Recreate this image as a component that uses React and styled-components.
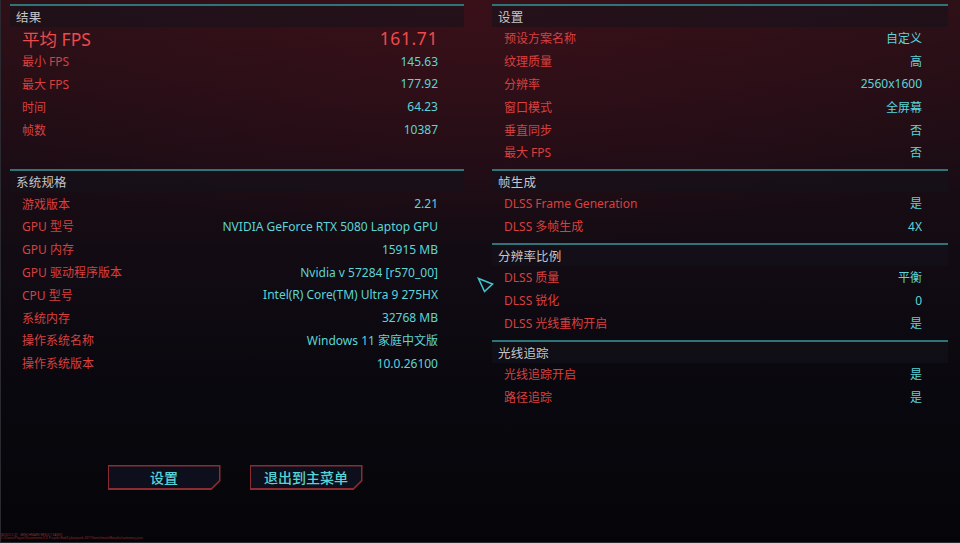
import React from "react";
import styled, { createGlobalStyle } from "styled-components";

const Global = createGlobalStyle`
  html, body { margin: 0; padding: 0; background: #06060a; }
  body { font-family: "Noto Sans", "Noto Sans CJK SC", sans-serif; }
  * { box-sizing: border-box; }
`;

const Page = styled.div`
  position: relative;
  width: 960px;
  height: 543px;
  overflow: hidden;
  background:
    radial-gradient(ellipse 70% 45% at 50% 0%, rgba(70, 16, 26, 0.55), rgba(0, 0, 0, 0) 100%),
    linear-gradient(180deg, #2a1017 0%, #1f0d15 22%, #120b13 48%, #09080e 72%, #050509 100%);
  box-shadow: inset 1px -1px 0 #2a2a30;
  display: grid;
  grid-template-columns: 454px 456px;
  column-gap: 28px;
  padding: 4px 0 0 10px;
  align-items: start;
`;

const Column = styled.div`
  display: flex;
  flex-direction: column;
  gap: 5.3px;
`;

const Section = styled.section`
  border-top: 2px solid #2f7479;
  min-height: ${(p) => p.$minH || 0}px;
`;

const SectionHead = styled.div`
  height: 21px;
  display: flex;
  align-items: center;
  padding-left: 6px;
  background: rgba(20, 18, 28, 0.55);
  color: #c6c6c8;
  font-size: 12.5px;
  letter-spacing: 0.2px;
`;

const Row = styled.div`
  height: 22.8px;
  display: flex;
  align-items: center;
  justify-content: space-between;
  padding: 0 26px 0 12px;
  font-size: ${(p) => (p.$big ? 17.5 : 12)}px;
`;

const Label = styled.span`
  color: ${(p) => (p.$big ? "#ee4a4b" : "#d8403f")};
  white-space: nowrap;
`;

const Value = styled.span`
  color: ${(p) => (p.$big ? "#ee4a4b" : "#5cd4d8")};
  white-space: nowrap;
  letter-spacing: ${(p) => (p.$big ? "0.6px" : "0")};
`;

const Buttons = styled.div`
  display: flex;
  justify-content: center;
  gap: 29px;
  margin-top: 85px;
  padding-right: 4px;
`;

const cut = (c) =>
  `polygon(0 0, 100% 0, 100% calc(100% - ${c}px), calc(100% - ${c}px) 100%, 0 100%)`;

const Btn = styled.button`
  width: 113px;
  height: 25px;
  padding: 1.5px;
  border: none;
  background: #8a2c32;
  clip-path: ${cut(9)};
  cursor: pointer;
  display: flex;
`;

const BtnInner = styled.span`
  flex: 1;
  display: flex;
  align-items: center;
  justify-content: center;
  background: #0e0f1c;
  clip-path: ${cut(8.3)};
  color: #55d5d8;
  font-family: "Noto Sans CJK SC", sans-serif;
  font-size: 14px;
  font-weight: 500;
`;

const Cursor = styled.svg`
  position: absolute;
  left: 476px;
  top: 276px;
`;

const Footnote = styled.div`
  position: absolute;
  left: 1px;
  bottom: 2px;
  color: #a8302f;
  font-size: 3.2px;
  line-height: 3.6px;
  white-space: nowrap;
  opacity: 0.9;
`;

const results = [
  ["最小 FPS", "145.63"],
  ["最大 FPS", "177.92"],
  ["时间", "64.23"],
  ["帧数", "10387"],
];

const specs = [
  ["游戏版本", "2.21"],
  ["GPU 型号", "NVIDIA GeForce RTX 5080 Laptop GPU"],
  ["GPU 内存", "15915 MB"],
  ["GPU 驱动程序版本", "Nvidia v 57284 [r570_00]"],
  ["CPU 型号", "Intel(R) Core(TM) Ultra 9 275HX"],
  ["系统内存", "32768 MB"],
  ["操作系统名称", "Windows 11 家庭中文版"],
  ["操作系统版本", "10.0.26100"],
];

const rightSections = [
  {
    title: "设置",
    rows: [
      ["预设方案名称", "自定义"],
      ["纹理质量", "高"],
      ["分辨率", "2560x1600"],
      ["窗口模式", "全屏幕"],
      ["垂直同步", "否"],
      ["最大 FPS", "否"],
    ],
  },
  {
    title: "帧生成",
    rows: [
      ["DLSS Frame Generation", "是"],
      ["DLSS 多帧生成", "4X"],
    ],
  },
  {
    title: "分辨率比例",
    rows: [
      ["DLSS 质量", "平衡"],
      ["DLSS 锐化", "0"],
      ["DLSS 光线重构开启", "是"],
    ],
  },
  {
    title: "光线追踪",
    rows: [
      ["光线追踪开启", "是"],
      ["路径追踪", "是"],
    ],
  },
];

export default function App() {
  return (
    <>
      <Global />
      <Page>
        <Column>
          <Section $minH={160}>
            <SectionHead>结果</SectionHead>
            <Row $big>
              <Label $big>平均 FPS</Label>
              <Value $big>161.71</Value>
            </Row>
            {results.map(([l, v]) => (
              <Row key={l}>
                <Label>{l}</Label>
                <Value>{v}</Value>
              </Row>
            ))}
          </Section>
          <Section>
            <SectionHead>系统规格</SectionHead>
            {specs.map(([l, v]) => (
              <Row key={l}>
                <Label>{l}</Label>
                <Value>{v}</Value>
              </Row>
            ))}
          </Section>
          <Buttons>
            <Btn>
              <BtnInner>设置</BtnInner>
            </Btn>
            <Btn>
              <BtnInner>退出到主菜单</BtnInner>
            </Btn>
          </Buttons>
        </Column>
        <Column>
          {rightSections.map((s) => (
            <Section key={s.title}>
              <SectionHead>{s.title}</SectionHead>
              {s.rows.map(([l, v]) => (
                <Row key={l}>
                  <Label>{l}</Label>
                  <Value>{v}</Value>
                </Row>
              ))}
            </Section>
          ))}
        </Column>
        <Cursor width="20" height="20" viewBox="0 0 20 20">
          <path
            d="M2.5 2.5 L16.5 8 L8.5 15.5 Z"
            fill="none"
            stroke="#3fc6cf"
            strokeWidth="1.6"
            strokeLinejoin="miter"
          />
        </Cursor>
        <Footnote>
          <div>BUILD 2.21 · BENCHMARK RESULT SAVED</div>
          <div>C:/Users/Player/Documents/CD Projekt Red/Cyberpunk 2077/benchmarkResults/summary.json</div>
        </Footnote>
      </Page>
    </>
  );
}
